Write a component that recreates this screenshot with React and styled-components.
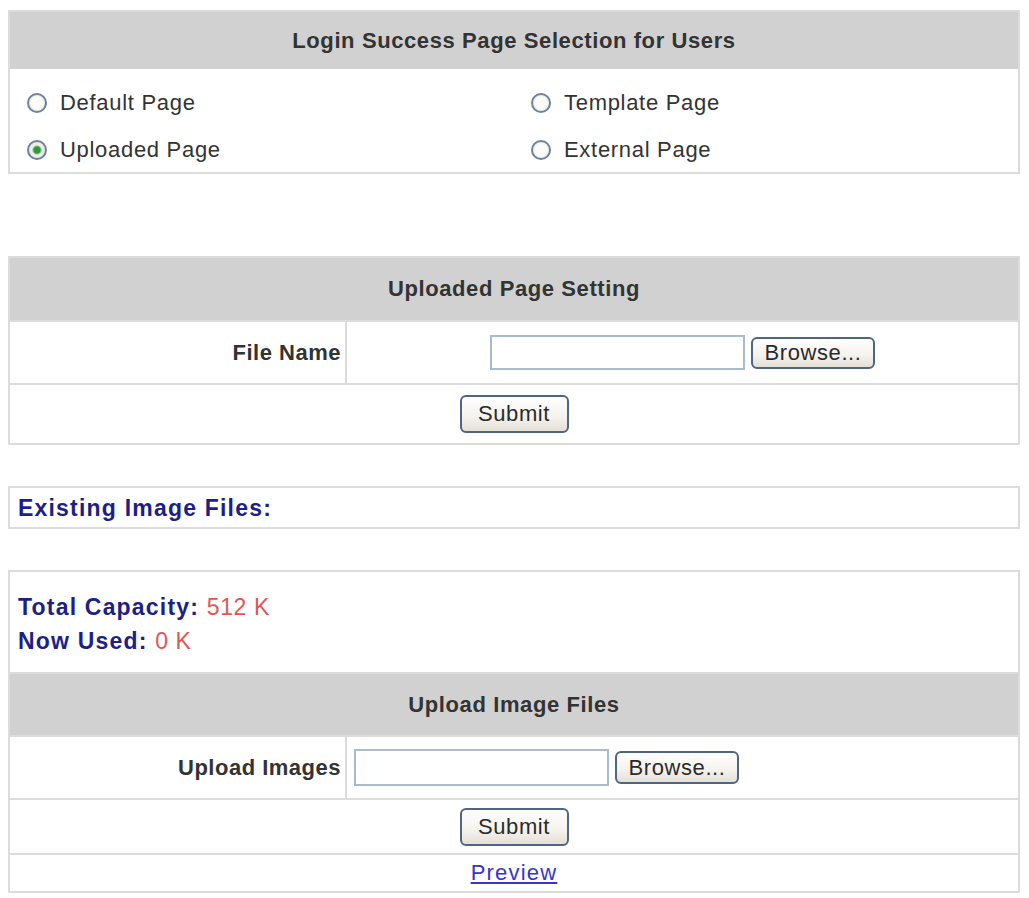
import styled, { createGlobalStyle } from "styled-components";

const GlobalStyle = createGlobalStyle`
  *, *::before, *::after {
    box-sizing: border-box;
  }
  body {
    margin: 0;
    background: #fff;
    font-family: "Liberation Sans", Arial, sans-serif;
  }
`;

const Page = styled.div`
  width: 1020px;
  padding: 10px 0 4px 8px;
  display: flex;
  flex-direction: column;
`;

const Panel = styled.section`
  border: 2px solid #dcdcdc;
  margin-top: ${(p) => p.$mt || 0}px;
  height: ${(p) => (p.$h ? `${p.$h}px` : "auto")};
  color: #333;
  font-size: 22px;
  letter-spacing: 0.7px;
`;

const HeadBar = styled.div`
  height: ${(p) => p.$h}px;
  background: #d1d1d1;
  display: flex;
  align-items: center;
  justify-content: center;
  font-weight: bold;
  letter-spacing: 0.6px;
  border-top: ${(p) => (p.$ruled ? "2px solid #dcdcdc" : "none")};
`;

const ChoiceGrid = styled.div`
  display: grid;
  grid-template-columns: 1fr 1fr;
  grid-auto-rows: 47px;
  padding: 10px 0 0;
`;

const Choice = styled.label`
  display: flex;
  align-items: center;
  gap: 13px;
  padding-left: 17px;
`;

const Radio = styled.span`
  width: 20px;
  height: 20px;
  border-radius: 50%;
  border: 2px solid #6f8299;
  background: ${(p) =>
    p.$checked
      ? "radial-gradient(circle, #2c9a3a 0 3px, #7cc67f 4px, #eef0ec 5px, #dfe2e0 100%)"
      : "radial-gradient(circle, #fbfbf8 0 50%, #dcdedb 100%)"};
  flex-shrink: 0;
`;

const FieldRow = styled.div`
  display: grid;
  grid-template-columns: 335px 1fr;
  height: ${(p) => p.$h}px;
  border-top: 2px solid #dcdcdc;
`;

const LabelCell = styled.div`
  display: flex;
  align-items: center;
  justify-content: flex-end;
  padding-right: 4px;
  font-weight: bold;
  letter-spacing: 0.5px;
`;

const ValueCell = styled.div`
  display: flex;
  align-items: center;
  justify-content: ${(p) => (p.$center ? "center" : "flex-start")};
  gap: 6px;
  padding-left: ${(p) => (p.$center ? 0 : 7)}px;
  border-left: 2px solid #dcdcdc;
`;

const CenterRow = styled.div`
  height: ${(p) => p.$h}px;
  display: flex;
  align-items: center;
  justify-content: center;
  border-top: 2px solid #dcdcdc;
`;

const FileInput = styled.input`
  width: 255px;
  height: ${(p) => p.$h}px;
  border: 2px solid #a9bccf;
  background: #fff;
  margin: 0;
`;

const Button = styled.button`
  width: ${(p) => p.$w}px;
  height: ${(p) => p.$h}px;
  margin: 0;
  padding: 0;
  border: 2px solid #4f6580;
  border-radius: 6px;
  background: linear-gradient(#ffffff, #f4f2ec 60%, #e3e0d8);
  font-family: "Liberation Sans", Arial, sans-serif;
  font-size: 22px;
  letter-spacing: 0.6px;
  color: #2b2b2b;
`;

const InfoLine = styled.div`
  height: ${(p) => p.$h}px;
  display: flex;
  flex-direction: column;
  justify-content: center;
  padding-left: 8px;
  padding-top: ${(p) => p.$pt || 0}px;
`;

const NavyText = styled.span`
  color: #1d1f86;
  font-weight: bold;
  font-size: 23px;
  letter-spacing: 1.2px;
  line-height: 34px;
`;

const RedValue = styled.span`
  color: #e45555;
  font-weight: normal;
  letter-spacing: 0.6px;
`;

const PreviewLink = styled.a`
  color: #3636c8;
  text-decoration: underline;
  letter-spacing: 1.2px;
  cursor: pointer;
`;

function RadioChoice({ label, checked }) {
  return (
    <Choice>
      <Radio $checked={checked} />
      {label}
    </Choice>
  );
}

export default function App() {
  return (
    <Page>
      <GlobalStyle />

      <Panel $h={164}>
        <HeadBar $h={57}>Login Success Page Selection for Users</HeadBar>
        <ChoiceGrid>
          <RadioChoice label="Default Page" />
          <RadioChoice label="Template Page" />
          <RadioChoice label="Uploaded Page" checked />
          <RadioChoice label="External Page" />
        </ChoiceGrid>
      </Panel>

      <Panel $mt={82}>
        <HeadBar $h={62}>Uploaded Page Setting</HeadBar>
        <FieldRow $h={63}>
          <LabelCell>File Name</LabelCell>
          <ValueCell $center>
            <FileInput type="text" $h={35} />
            <Button $w={124} $h={32}>Browse...</Button>
          </ValueCell>
        </FieldRow>
        <CenterRow $h={60}>
          <Button $w={109} $h={38}>Submit</Button>
        </CenterRow>
      </Panel>

      <Panel $mt={41}>
        <InfoLine $h={39}>
          <NavyText>Existing Image Files:</NavyText>
        </InfoLine>
      </Panel>

      <Panel $mt={41}>
        <InfoLine $h={100} $pt={4}>
          <NavyText>
            Total Capacity: <RedValue>512 K</RedValue>
          </NavyText>
          <NavyText>
            Now Used: <RedValue>0 K</RedValue>
          </NavyText>
        </InfoLine>
        <HeadBar $h={63} $ruled>Upload Image Files</HeadBar>
        <FieldRow $h={63}>
          <LabelCell>Upload Images</LabelCell>
          <ValueCell>
            <FileInput type="text" $h={37} />
            <Button $w={124} $h={33}>Browse...</Button>
          </ValueCell>
        </FieldRow>
        <CenterRow $h={55}>
          <Button $w={109} $h={38}>Submit</Button>
        </CenterRow>
        <CenterRow $h={38}>
          <PreviewLink>Preview</PreviewLink>
        </CenterRow>
      </Panel>
    </Page>
  );
}
